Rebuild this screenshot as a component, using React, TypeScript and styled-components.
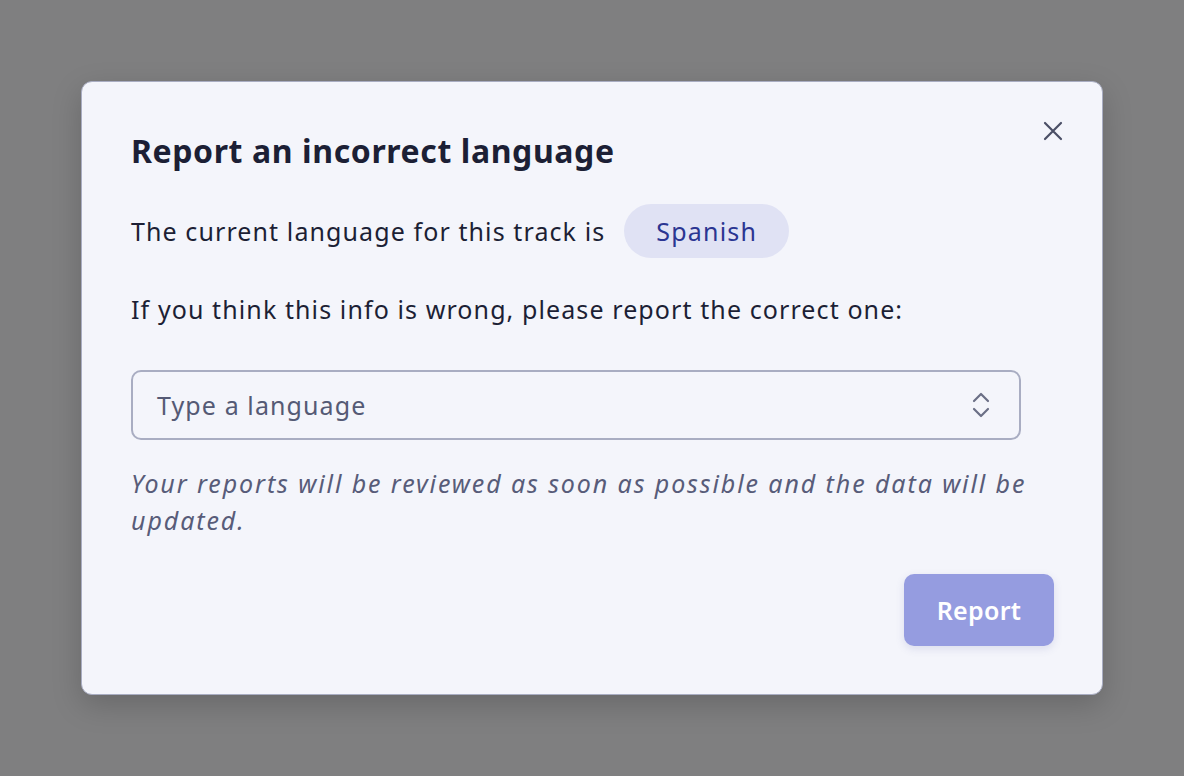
import React from 'react';
import styled, { createGlobalStyle } from 'styled-components';

const GlobalStyle = createGlobalStyle`
  html, body {
    margin: 0;
    padding: 0;
    height: 100%;
  }
  body {
    background: #7f7f80;
    font-family: 'Noto Sans', 'Open Sans', sans-serif;
  }
`;

const Backdrop = styled.div`
  width: 1184px;
  height: 776px;
  display: flex;
  align-items: flex-start;
  justify-content: center;
  padding-top: 81px;
  box-sizing: border-box;
`;

const Modal = styled.div`
  position: relative;
  width: 1022px;
  box-sizing: border-box;
  background: #f4f5fb;
  border: 1.5px solid #a9adc2;
  border-radius: 11px;
  box-shadow: 0 10px 30px rgba(0, 0, 0, 0.18);
  padding: 50px 48px 48px 49px;
  color: #1c1f35;
`;

const CloseButton = styled.button`
  position: absolute;
  right: 36px;
  top: 36px;
  width: 26px;
  height: 26px;
  padding: 0;
  border: none;
  background: transparent;
  display: flex;
  align-items: center;
  justify-content: center;
  color: #4b4f66;
  cursor: pointer;
`;

const Title = styled.h2`
  margin: 0;
  font-size: 32px;
  line-height: 37px;
  font-weight: 700;
  letter-spacing: 0.6px;
  color: #1c1f35;
`;

const Text = styled.p`
  margin: 0;
  font-size: 25px;
  line-height: 36px;
  letter-spacing: 1.1px;
  color: #1c1f35;
`;

const CurrentRow = styled.div`
  display: flex;
  align-items: center;
  gap: 19px;
  margin-top: 35px;
  height: 54px;
`;

const Chip = styled.span`
  display: inline-flex;
  align-items: center;
  height: 54px;
  padding: 0 32px;
  border-radius: 27px;
  background: #e0e2f4;
  color: #2b3592;
  font-size: 25px;
  letter-spacing: 1.2px;
`;

const Prompt = styled(Text)`
  margin-top: 33px;
`;

const SelectBox = styled.div`
  margin-top: 43px;
  width: 890px;
  height: 70px;
  box-sizing: border-box;
  border: 2px solid #a9adc2;
  border-radius: 10px;
  display: flex;
  align-items: center;
  justify-content: space-between;
  padding: 0 28px 0 24px;
  color: #555a75;
  font-size: 25px;
  letter-spacing: 1.1px;
`;

const Note = styled.p`
  margin: 25px 0 0;
  font-size: 25px;
  line-height: 37px;
  letter-spacing: 1.9px;
  font-style: italic;
  color: #585c79;
`;

const Footer = styled.div`
  display: flex;
  justify-content: flex-end;
  margin-top: 35px;
`;

const ReportButton = styled.button`
  width: 150px;
  height: 72px;
  border: none;
  border-radius: 10px;
  background: #959ce0;
  color: #ffffff;
  font-family: inherit;
  font-size: 25px;
  font-weight: 600;
  letter-spacing: 0.3px;
  box-shadow: 0 3px 8px rgba(80, 90, 160, 0.15);
  cursor: pointer;
`;

export default function App() {
  return (
    <>
      <GlobalStyle />
      <Backdrop>
        <Modal>
          <CloseButton aria-label="Close">
            <svg width="22" height="22" viewBox="0 0 22 22" fill="none">
              <path d="M3 3L19 19M19 3L3 19" stroke="currentColor" strokeWidth="2.2" strokeLinecap="round" />
            </svg>
          </CloseButton>
          <Title>Report an incorrect language</Title>
          <CurrentRow>
            <Text>The current language for this track is</Text>
            <Chip>Spanish</Chip>
          </CurrentRow>
          <Prompt>If you think this info is wrong, please report the correct one:</Prompt>
          <SelectBox>
            <span>Type a language</span>
            <svg width="20" height="30" viewBox="0 0 20 30" fill="none">
              <path d="M3 11L10 4L17 11M3 19L10 26L17 19" stroke="#6b6f86" strokeWidth="2.2" strokeLinecap="round" strokeLinejoin="round" />
            </svg>
          </SelectBox>
          <Note>Your reports will be reviewed as soon as possible and the data will be updated.</Note>
          <Footer>
            <ReportButton>Report</ReportButton>
          </Footer>
        </Modal>
      </Backdrop>
    </>
  );
}
